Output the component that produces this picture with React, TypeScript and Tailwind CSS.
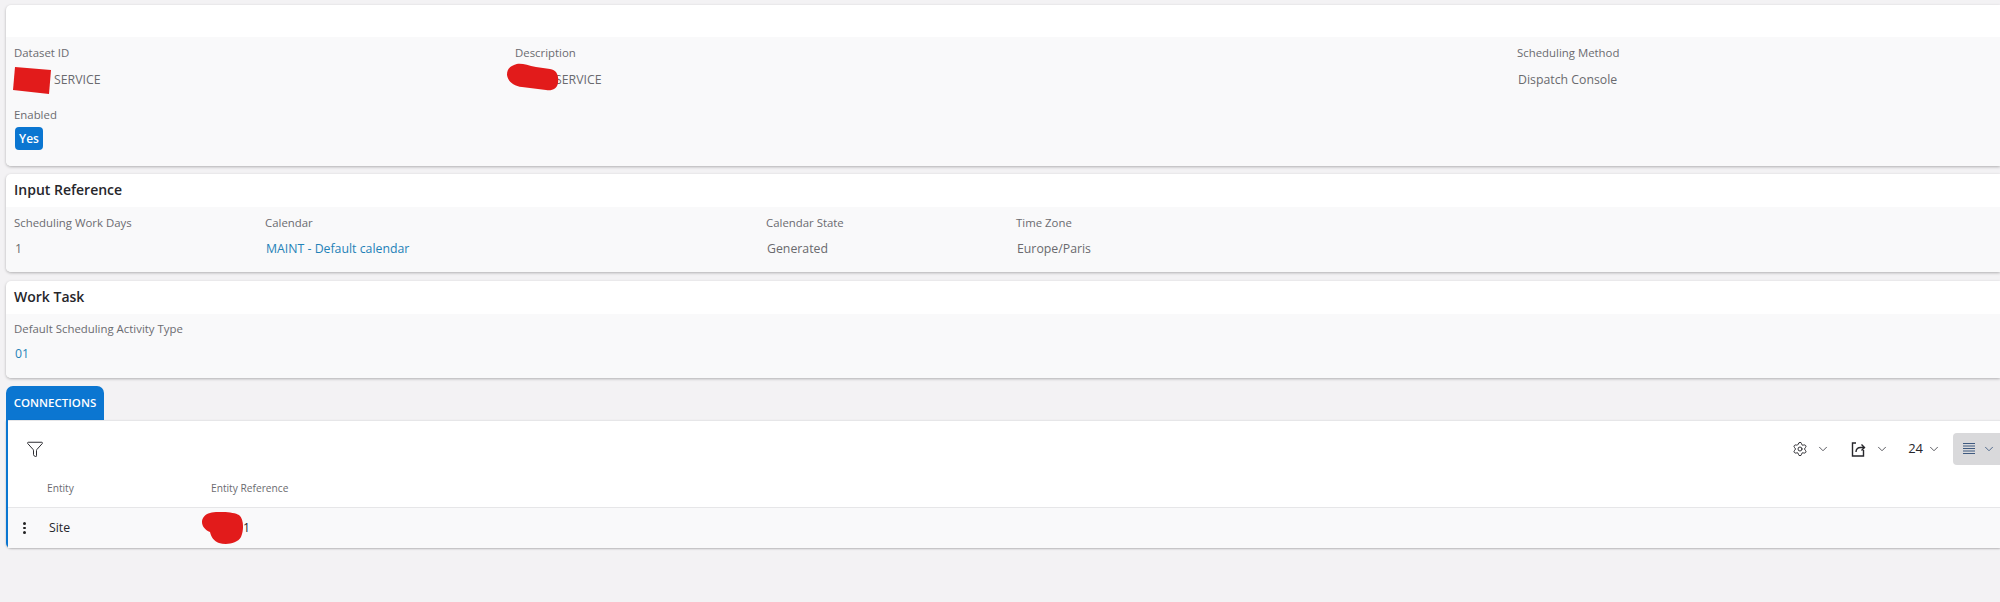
import React from 'react';
import { ChevronDown, Funnel, Settings } from 'lucide-react';

const Label: React.FC<{ children: React.ReactNode }> = ({ children }) => (
  <div className="h-[18px] text-[11.4px] leading-[18px] text-[#6b6b70]">{children}</div>
);

const Value: React.FC<{ children: React.ReactNode; link?: boolean; gap?: string }> = ({ children, link, gap = 'mt-[8px]' }) => (
  <div className={`relative ${gap} h-[18px] pl-[1px] text-[12.3px] leading-[18px] ${link ? 'text-[#1f82b8]' : 'text-[#6a6a6e]'}`}>
    {children}
  </div>
);

const Field: React.FC<{ label: string; width?: string; children: React.ReactNode }> = ({ label, width, children }) => (
  <div className={width}>
    <Label>{label}</Label>
    {children}
  </div>
);

const Card: React.FC<{ title?: string; children: React.ReactNode }> = ({ title, children }) => (
  <section className="ml-[6px] rounded-l-[5px] bg-white shadow-[0_1px_3px_rgba(0,0,0,0.28)]">
    <h2 className={`${title ? 'h-[33px] pl-[8px]' : 'h-[32px]'} text-[14px] font-semibold leading-[32px] text-[#26262b]`}>{title}</h2>
    <div className="rounded-bl-[5px] bg-[#f9f9fa] pl-[8px]">{children}</div>
  </section>
);

const ExportIcon = () => (
  <svg width="15" height="15" viewBox="0 0 15 15" fill="none" stroke="#26262b" strokeWidth="1.4">
    <path d="M5 1H1.5v13h11V8" />
    <path d="M5 10c0-3 2-4.5 4.5-4.5H13M10.5 2.5l3 3-3 3" />
  </svg>
);

const DensityIcon = () => (
  <svg width="12" height="12" viewBox="0 0 12 12" stroke="#3f5a80" strokeWidth="1">
    <path d="M0 .5h12M0 3h12M0 5.5h12M0 8h12M0 10.5h12" />
  </svg>
);

export default function App() {
  return (
    <div className="h-[602px] w-[2000px] overflow-hidden bg-[#f3f2f4] pt-[5px] font-['Open_Sans',sans-serif]">
      <Card>
        <div className="h-[129px] pt-[7px]">
          <div className="flex">
            <Field label="Dataset ID" width="w-[501px]">
              <Value gap="mt-[9px]">
                <span className="pl-[39px]">SERVICE</span>
                <svg className="absolute left-[-1px] top-[-4px]" width="38" height="27" viewBox="0 0 38 27">
                  <path d="M2 0L38 3L36 27L0 23Z" fill="#e21b1b" />
                </svg>
              </Value>
            </Field>
            <Field label="Description" width="w-[1002px]">
              <Value gap="mt-[9px]">
                <span className="pl-[39px]">SERVICE</span>
                <svg className="absolute left-[-9px] top-[-8px]" width="54" height="29" viewBox="0 0 54 29">
                  <path d="M8 2C14 -1 20 2 30 4L44 6C51 7 53 13 52 20C51 26 46 28 40 27L16 24C8 23 2 19 1 12C1 7 3 4 8 2Z" fill="#e21b1b" />
                </svg>
              </Value>
            </Field>
            <Field label="Scheduling Method">
              <Value gap="mt-[9px]">Dispatch Console</Value>
            </Field>
          </div>
          <div className="mt-[17px]">
            <Label>Enabled</Label>
            <span className="ml-[1px] mt-[3px] flex h-[23px] w-[28px] items-center justify-center rounded-[4px] bg-[#0b76d1] text-[12px] font-semibold text-white">
              Yes
            </span>
          </div>
        </div>
      </Card>

      <div className="mt-[8px]">
        <Card title="Input Reference">
          <div className="flex h-[65px] pt-[7px]">
            <Field label="Scheduling Work Days" width="w-[251px]">
              <Value>1</Value>
            </Field>
            <Field label="Calendar" width="w-[501px]">
              <Value link>MAINT - Default calendar</Value>
            </Field>
            <Field label="Calendar State" width="w-[250px]">
              <Value>Generated</Value>
            </Field>
            <Field label="Time Zone">
              <Value>Europe/Paris</Value>
            </Field>
          </div>
        </Card>
      </div>

      <div className="mt-[9px]">
        <Card title="Work Task">
          <div className="h-[64px] pt-[6px]">
            <Field label="Default Scheduling Activity Type">
              <Value link gap="mt-[7px]">01</Value>
            </Field>
          </div>
        </Card>
      </div>

      <div className="ml-[6px] mt-[8px] flex h-[34px] w-[98px] items-center justify-center rounded-t-[7px] bg-[#0b76d1] text-[11.5px] font-semibold text-white">
        CONNECTIONS
      </div>
      <section className="ml-[6px] rounded-bl-[5px] border-l-[2px] border-[#0b76d1] bg-white shadow-[0_1px_2px_rgba(0,0,0,0.25)]">
        <div className="flex h-[57px] items-center border-t border-[#e6e6e8] pl-[18px]">
          <Funnel size={18} strokeWidth={1.3} color="#26262b" />
          <div className="ml-auto flex items-center text-[#26262b]">
            <Settings size={16} strokeWidth={1.4} />
            <ChevronDown size={14} strokeWidth={1.5} className="ml-[8px] text-[#45454c]" />
            <span className="ml-[21px]"><ExportIcon /></span>
            <ChevronDown size={14} strokeWidth={1.5} className="ml-[9px] text-[#45454c]" />
            <span className="ml-[19px] text-[13px]">24</span>
            <ChevronDown size={14} strokeWidth={1.5} className="ml-[4px] text-[#45454c]" />
            <div className="ml-[12px] flex h-[32px] w-[47px] items-center rounded-l-[4px] bg-[#d9d9db] pl-[10px]">
              <DensityIcon />
              <ChevronDown size={14} strokeWidth={1.5} className="ml-[7px] text-[#3f5a80]" />
            </div>
          </div>
        </div>
        <div className="flex h-[31px] items-start border-b border-[#e6e6e8] text-[10.2px] leading-[22px] text-[#6b6b70]">
          <span className="w-[203px] pl-[39px]">Entity</span>
          <span>Entity Reference</span>
        </div>
        <div className="flex h-[40px] items-center bg-[#f9f9fa] text-[12.3px] text-[#26262b]">
          <span className="flex w-[33px] flex-col items-center gap-[2px]">
            <span className="h-[2.5px] w-[2.5px] rounded-full bg-[#222]" />
            <span className="h-[2.5px] w-[2.5px] rounded-full bg-[#222]" />
            <span className="h-[2.5px] w-[2.5px] rounded-full bg-[#222]" />
          </span>
          <span className="ml-[8px] w-[163px]">Site</span>
          <span className="relative pl-[31px]">
            1
            <svg className="absolute left-[-10px] top-[-7px]" width="42" height="33" viewBox="0 0 42 33">
              <path d="M8 1C16 -1 32 0 37 3C42 7 42 18 39 25C35 32 24 33 17 31C12 29 9 25 8 20C3 18 0 14 0 10C0 6 3 2 8 1Z" fill="#e21b1b" />
            </svg>
          </span>
        </div>
      </section>
    </div>
  );
}
